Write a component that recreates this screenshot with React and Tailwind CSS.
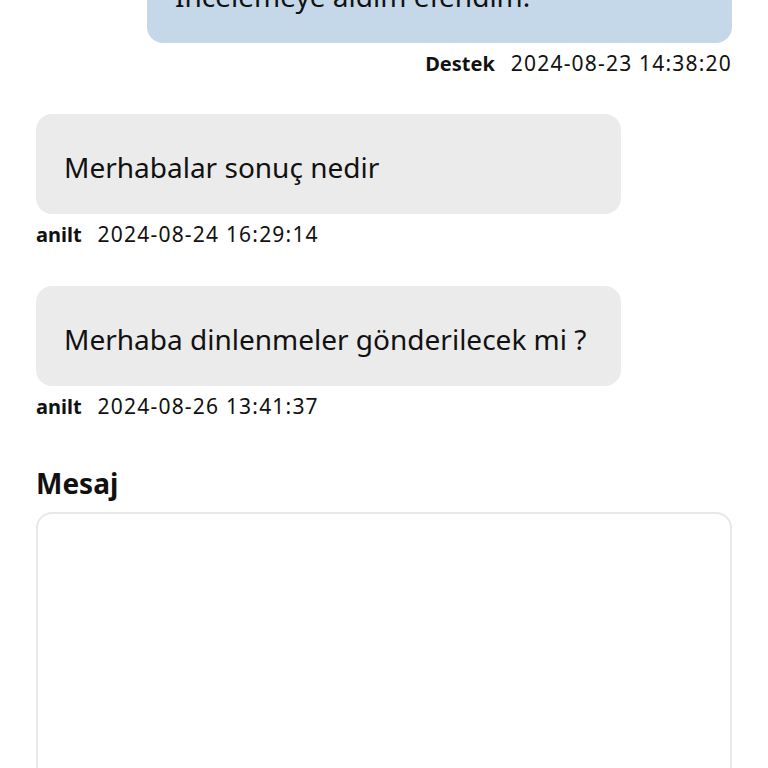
function Meta({ name, date }) {
  return (
    <div className="mt-[6px] flex items-baseline gap-[16px] leading-[28px]">
      <span className="text-[20px] font-bold">{name}</span>
      <span className="text-[21px] tracking-[1.2px]">{date}</span>
    </div>
  );
}

function Bubble({ children, blue }) {
  return (
    <div
      className={
        blue
          ? "w-[585px] rounded-[16px] bg-[#c4d8ea] px-[28px] pt-[33px] pb-[27px] text-[28px] leading-[40px]"
          : "w-[585px] rounded-[16px] bg-[#ebebeb] px-[28px] pt-[33px] pb-[27px] text-[28px] leading-[40px]"
      }
    >
      {children}
    </div>
  );
}

export default function App() {
  const font = { fontFamily: '"Noto Sans", "Open Sans", sans-serif' };
  return (
    <div className="h-[768px] w-[768px] overflow-hidden bg-white text-[#111]" style={font}>
      <div className="-mt-[57px] flex flex-col px-[36px]">
        <div className="flex flex-col items-end">
          <Bubble blue>İncelemeye aldım efendim.</Bubble>
          <Meta name="Destek" date="2024-08-23 14:38:20" />
        </div>

        <div className="mt-[36px] flex flex-col items-start">
          <Bubble>Merhabalar sonuç nedir</Bubble>
          <Meta name="anilt" date="2024-08-24 16:29:14" />
        </div>

        <div className="mt-[37px] flex flex-col items-start">
          <Bubble>Merhaba dinlenmeler gönderilecek mi ?</Bubble>
          <Meta name="anilt" date="2024-08-26 13:41:37" />
        </div>

        <label className="mt-[44px] text-[28px] font-bold leading-[36px]">Mesaj</label>
        <textarea className="mt-[11px] h-[300px] w-full resize-none rounded-[16px] border-2 border-[#e8e8e8] bg-white" />
      </div>
    </div>
  );
}
